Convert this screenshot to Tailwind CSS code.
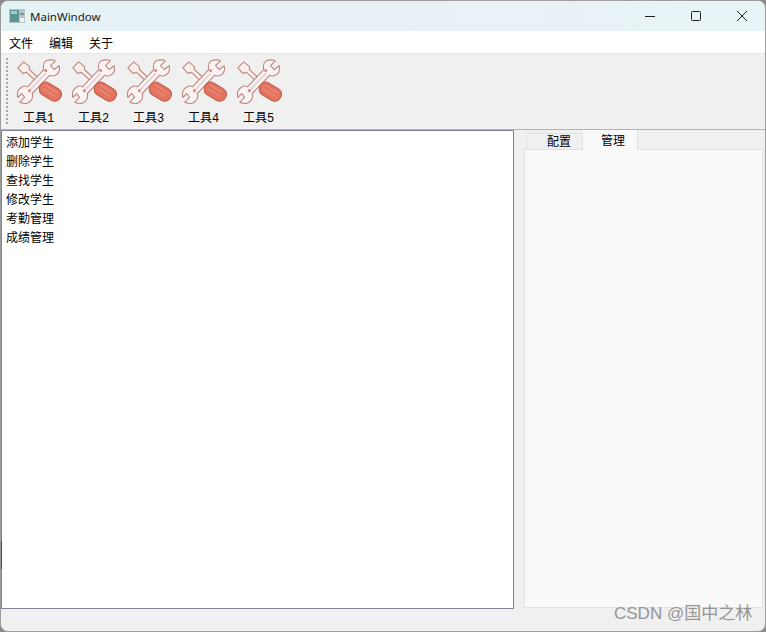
<!doctype html>
<html><head><meta charset="utf-8"><script src="https://cdn.jsdelivr.net/npm/@tailwindcss/browser@4"></script></head>
<body class="m-0 bg-[#8a8a8a]">
<svg width="0" height="0" class="absolute"><defs>
<symbol id="tool" viewBox="0 0 48 48">
  <g stroke="#c08a80" stroke-width="1.2" stroke-linejoin="round">
    <path d="M2 9 L8 3 L14 8 L14 11 L30 26 L27 29 L11 14 L7 15 Z" fill="#f8efec"/>
    <path d="M31 2 C36 0 40 1 41 2 L36 7 L40 11 L45 7 C46 11 45 15 41 17 C39 18 37 18 35 17 L17 36 C18 40 16 44 12 46 C9 47 6 46 4 45 L9 40 L6 36 L2 40 C1 36 2 32 5 30 C7 28 10 28 12 29 L29 11 C28 7 29 4 31 2 Z" fill="#fbf4f5"/>
    <path d="M25 28 C27 24 31 23 34 25 L44 31 C48 34 48 38 46 41 C44 44 40 45 37 43 L27 37 C24 35 24 31 25 28 Z" fill="#e3745f" stroke="#c4604d"/>
  </g>
  <path d="M30 27 L43 35 M28 31 L41 39" stroke="#eb9787" stroke-width="1" fill="none"/>
  <path d="M15 32 L31 15" stroke="#e3d3d6" stroke-width="2" fill="none"/>
  <circle cx="31" cy="12" r="1.6" fill="#e08a7a"/><circle cx="14" cy="33" r="1.6" fill="#e08a7a"/>
</symbol></defs></svg>
<div class="relative w-[766px] h-[632px] overflow-hidden flex flex-col rounded-t-[8px] rounded-b-[8px] border border-[#9c9c9c] bg-[#f0f0f0] text-[12px] text-black font-['Liberation_Mono','Noto_Sans_CJK_SC',monospace]">
  <div class="absolute left-0 top-[540px] w-px h-[28px] bg-[#4a4a4a]"></div>
  <div class="h-[30px] shrink-0 flex items-center bg-gradient-to-r from-[#e5f2f4] via-[#e9f1f7] to-[#e8f4f6]">
    <svg class="ml-[8px]" width="16" height="14" viewBox="0 0 16 14"><rect width="16" height="14" fill="#b9c6c8"/><rect x="1" y="1" width="9" height="12" fill="#5d9492"/><rect x="2" y="2" width="6" height="3" fill="#a9c6d6"/><rect x="11" y="9" width="4" height="4" fill="#eef1f1"/><rect x="11" y="4" width="4" height="2" fill="#7f9294"/></svg>
    <span class="ml-[5px] mt-[1px] text-[11.5px] font-['Noto_Sans','Liberation_Sans',sans-serif] text-[#1a1a1a]">MainWindow</span>
    <div class="ml-auto flex items-center h-full">
      <div class="w-[46px] flex justify-center"><svg width="12" height="12" viewBox="0 0 12 12"><path d="M1 6.5H11" stroke="#222" stroke-width="1"/></svg></div>
      <div class="w-[46px] flex justify-center"><svg width="12" height="12" viewBox="0 0 12 12"><rect x="1.5" y="1.5" width="9" height="9" rx="1" fill="none" stroke="#222"/></svg></div>
      <div class="w-[46px] flex justify-center"><svg width="12" height="12" viewBox="0 0 12 12"><path d="M1 1L11 11M11 1L1 11" stroke="#222" stroke-width="1"/></svg></div>
    </div>
  </div>
  <div class="h-[23px] shrink-0 bg-white flex items-center pl-[8px] pt-[5px] gap-[16px] text-[12px] border-b border-[#e6e6e6]">
    <span>文件</span><span>编辑</span><span>关于</span>
  </div>
  <div class="h-[76px] shrink-0 flex border-b border-[#b4b4b4] bg-[#f0f0f0]">
    <div class="ml-[5px] mt-[4px] h-[66px] w-[2px] border-l-2 border-dotted border-[#a8a8a8]"></div>
    <div class="flex ml-[3px] pt-[5px]">
      <div class="w-[55px] flex flex-col items-center"><svg width="46" height="46"><use href="#tool"/></svg><span class="leading-[14px] mt-[7px]">工具1</span></div>
      <div class="w-[55px] flex flex-col items-center"><svg width="46" height="46"><use href="#tool"/></svg><span class="leading-[14px] mt-[7px]">工具2</span></div>
      <div class="w-[55px] flex flex-col items-center"><svg width="46" height="46"><use href="#tool"/></svg><span class="leading-[14px] mt-[7px]">工具3</span></div>
      <div class="w-[55px] flex flex-col items-center"><svg width="46" height="46"><use href="#tool"/></svg><span class="leading-[14px] mt-[7px]">工具4</span></div>
      <div class="w-[55px] flex flex-col items-center"><svg width="46" height="46"><use href="#tool"/></svg><span class="leading-[14px] mt-[7px]">工具5</span></div>
    </div>
  </div>
  <div class="flex flex-1 min-h-0">
    <div class="w-[513px] h-[479px] border border-[#82829a] bg-white pt-[4px] pl-[4px] shrink-0">
      <div class="h-[19px] leading-[19px]">添加学生</div>
      <div class="h-[19px] leading-[19px]">删除学生</div>
      <div class="h-[19px] leading-[19px]">查找学生</div>
      <div class="h-[19px] leading-[19px]">修改学生</div>
      <div class="h-[19px] leading-[19px]">考勤管理</div>
      <div class="h-[19px] leading-[19px]">成绩管理</div>
    </div>
    <div class="ml-[10px] flex flex-col w-[239px]">
      <div class="h-[19px] flex items-end pl-[2px] relative z-10">
        <div class="w-[57px] h-[17px] -mb-px border border-[#e2e2e2] bg-[#f0f0f0] pl-[20px] pt-[1px] leading-[16px]">配置</div>
        <div class="w-[55px] h-[20px] -mb-px border-r border-b-0 border-[#e2e2e2] bg-[#f9f9f9] pl-[18px] pt-[4px] leading-[16px]">管理</div>
      </div>
      <div class="h-[459px] border border-[#e4e4e4] bg-[#f9f9f9]"></div>
    </div>
  </div>
  <div class="absolute left-[613px] top-[602px] text-[17px] leading-[22px] text-[#969696] font-['Liberation_Sans','Noto_Sans_CJK_SC',sans-serif]">CSDN @国中之林</div>
</div>
</body></html>
